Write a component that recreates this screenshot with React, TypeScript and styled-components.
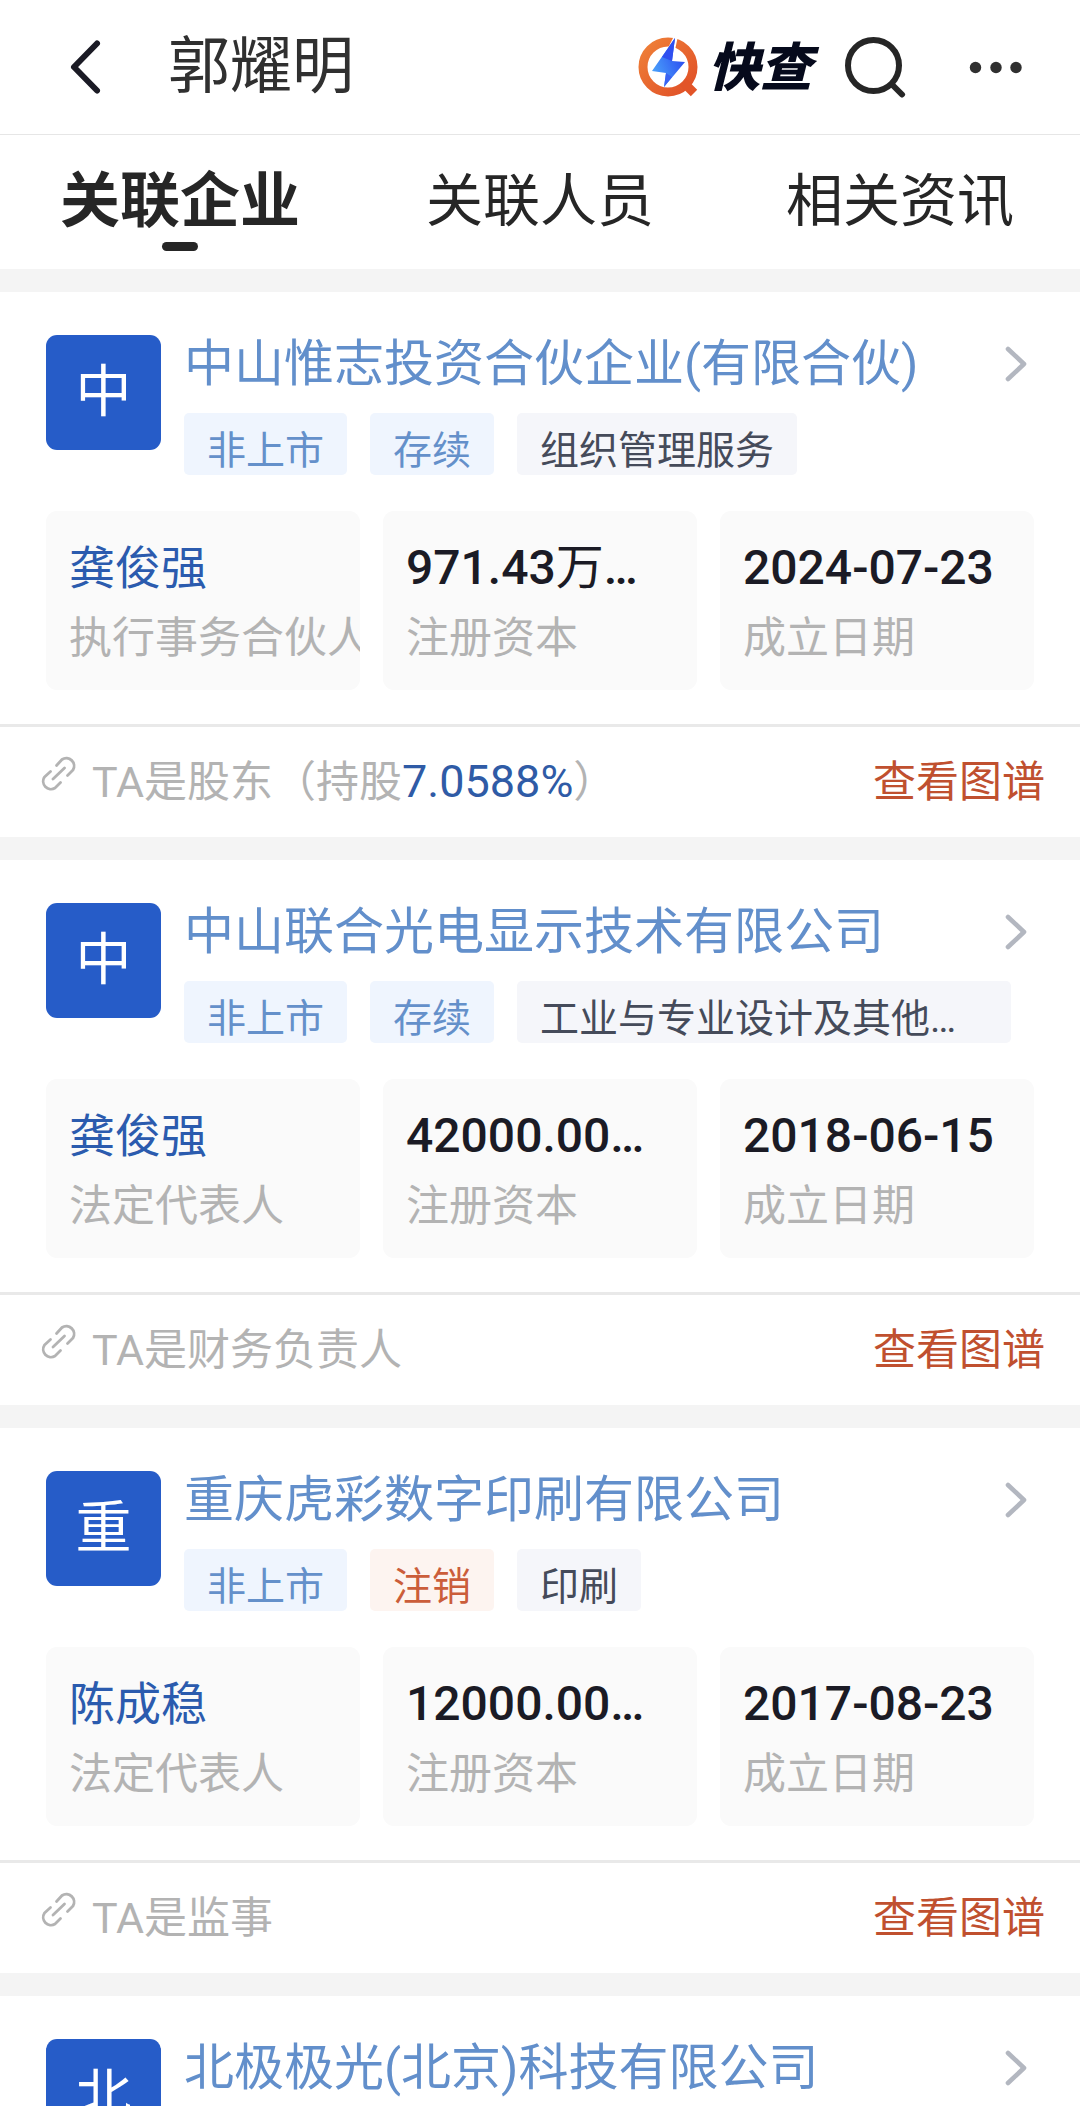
import React from "react";
import styled, { createGlobalStyle } from "styled-components";

const GlobalStyle = createGlobalStyle`
  * { box-sizing: border-box; }
  body {
    margin: 0;
    background: #fff;
    font-family: Roboto, "Noto Sans CJK SC", sans-serif;
    color: #262626;
  }
  button {
    margin: 0;
    padding: 0;
    border: 0;
    background: none;
    font: inherit;
    color: inherit;
    cursor: pointer;
  }
  a { color: inherit; text-decoration: none; }
  h1, h2, p, dl, dd { margin: 0; }
  svg { display: block; }
`;

const Screen = styled.div`
  height: 100vh;
  display: flex;
  flex-direction: column;
  overflow: hidden;
`;

const TopBar = styled.header`
  flex: none;
  height: 135px;
  display: flex;
  align-items: center;
  padding: 0 56px 0 68px;
  border-bottom: 1px solid #e6e6e6;
`;

const IconButton = styled.button`
  flex: none;
`;

const PersonName = styled.h1`
  flex: 1;
  margin-left: 64px;
  font-size: 62px;
  line-height: 80px;
  font-weight: 400;
  color: #303030;
`;

const Brand = styled.a`
  display: flex;
  align-items: center;
  gap: 8px;
  margin-right: 32px;
`;

const BrandName = styled.span`
  padding-top: 4px;
  font-size: 52px;
  line-height: 60px;
  font-weight: 900;
  font-style: italic;
  color: #060a1c;
`;

const Actions = styled.div`
  display: flex;
  align-items: center;
  gap: 62px;
`;

const Tabs = styled.nav`
  flex: none;
  display: grid;
  grid-template-columns: repeat(3, 1fr);
  height: 134px;
`;

const Tab = styled.button<{ $active?: boolean }>`
  position: relative;
  font-size: ${(p) => (p.$active ? 60 : 57)}px;
  font-weight: ${(p) => (p.$active ? 700 : 400)};
  line-height: 80px;

  &::after {
    content: "";
    display: ${(p) => (p.$active ? "block" : "none")};
    position: absolute;
    left: calc(50% - 18px);
    bottom: 18px;
    width: 36px;
    height: 9px;
    border-radius: 5px;
    background: #262626;
  }
`;

const CardList = styled.main`
  flex: 1;
  min-height: 0;
  display: flex;
  flex-direction: column;
  gap: 23px;
  padding-top: 23px;
  background: #f4f4f4;
  overflow-y: auto;
  scrollbar-width: none;
`;

const Card = styled.article`
  flex: none;
  background: #fff;
`;

const CardBody = styled.div`
  padding: 43px 46px 34px;
`;

const Summary = styled.div`
  display: flex;
  align-items: flex-start;
  gap: 23px;
`;

const Avatar = styled.div`
  flex: none;
  width: 115px;
  height: 115px;
  border-radius: 11px;
  background: #265cc8;
  color: #fff;
  font-size: 56px;
  line-height: 115px;
  text-align: center;
`;

const SummaryText = styled.div`
  flex: 1;
  min-width: 0;
`;

const CompanyLink = styled.a`
  display: flex;
  align-items: center;
  justify-content: space-between;
  padding-right: 6px;
`;

const CompanyName = styled.h2`
  font-size: 50px;
  line-height: 58px;
  font-weight: 400;
  color: #628fcb;
`;

const TagRow = styled.div`
  display: flex;
  gap: 23px;
  margin-top: 20px;
  padding-right: 23px;
`;

type Tone = "blue" | "red" | "gray";

const tones: Record<Tone, { bg: string; fg: string }> = {
  blue: { bg: "#eff5fe", fg: "#6490ca" },
  red: { bg: "#fdf4f0", fg: "#cb5d3a" },
  gray: { bg: "#f5f6fa", fg: "#454b5a" },
};

const Tag = styled.span<{ $tone: Tone }>`
  flex: ${(p) => (p.$tone === "gray" ? "0 1 auto" : "none")};
  min-width: 0;
  padding: 14px 23px 0;
  border-radius: 5px;
  font-size: 39px;
  line-height: 48px;
  white-space: nowrap;
  overflow: hidden;
  text-overflow: ellipsis;
  background: ${(p) => tones[p.$tone].bg};
  color: ${(p) => tones[p.$tone].fg};
`;

const Stats = styled.dl`
  display: grid;
  grid-template-columns: repeat(3, 1fr);
  gap: 23px;
  margin-top: 36px;
`;

const Stat = styled.div`
  display: flex;
  flex-direction: column-reverse;
  gap: 15px;
  min-width: 0;
  padding: 27px 23px;
  border-radius: 11px;
  background: #fafafa;
  overflow: hidden;
`;

const StatLabel = styled.dt`
  font-size: 43px;
  line-height: 50px;
  white-space: nowrap;
  color: #b3b3b3;
`;

const StatValue = styled.dd`
  font-size: 48px;
  line-height: 60px;
  font-weight: 500;
  white-space: nowrap;
  overflow: hidden;
  text-overflow: ellipsis;
  color: #1b1b25;
`;

const Unit = styled.span`
  font-weight: 400;
`;

const StatPerson = styled(StatValue)`
  font-size: 46px;
  font-weight: 400;
  color: #2b5bae;
`;

const Relation = styled.footer`
  display: flex;
  align-items: center;
  height: 113px;
  padding: 0 35px 0 40px;
  border-top: 3px solid #e9e9e9;
  font-size: 43px;
  line-height: 60px;
  color: #b3b3b3;
`;

const RelationText = styled.p`
  flex: 1;
  margin-left: 15px;
`;

const Share = styled.span`
  font-size: 45px;
  color: #2f5ba6;
`;

const GraphLink = styled.a`
  color: #c0502f;
`;

const LinkGlyph = styled.svg`
  flex: none;
  margin-bottom: 18px;
`;

const BackIcon = () => (
  <svg width="36" height="60" viewBox="0 0 36 60" fill="none" stroke="#1b1b25" strokeWidth="6" strokeLinecap="round" strokeLinejoin="round">
    <path d="M29 6.500 6 30 29 53.500" />
  </svg>
);

const SearchIcon = () => (
  <svg width="62" height="62" viewBox="0 0 62 62" fill="none" stroke="#262626" strokeWidth="6" strokeLinecap="round">
    <circle cx="29.500" cy="29.500" r="25.500" />
    <path d="M48.500 49 58 58.500" />
  </svg>
);

const MoreIcon = () => (
  <svg width="56" height="14" viewBox="0 0 56 14" fill="#303030">
    <circle cx="7.500" cy="7.500" r="5.700" />
    <circle cx="28" cy="7.500" r="5.700" />
    <circle cx="48" cy="7.500" r="5.700" />
  </svg>
);

const BrandMark = () => (
  <svg width="62" height="62" viewBox="0 0 62 62" fill="none">
    <defs>
      <linearGradient id="ring" x1="0" y1="0" x2="1" y2="1">
        <stop offset="0" stopColor="#ef8038" />
        <stop offset="1" stopColor="#e04f27" />
      </linearGradient>
      <linearGradient id="bolt" x1="14" y1="36" x2="46" y2="22" gradientUnits="userSpaceOnUse">
        <stop offset="0" stopColor="#4ba3fb" />
        <stop offset="1" stopColor="#2b4df0" />
      </linearGradient>
    </defs>
    <circle cx="30" cy="31" r="25" stroke="url(#ring)" strokeWidth="9" />
    <path d="M45 46 56 57" stroke="#e25428" strokeWidth="9" />
    <path d="M36 0 29 14 37 14 40 0Z" fill="#fff" />
    <path d="M37 2 14 35 28 37 26 51 47 26 34 25Z" fill="url(#bolt)" />
    <path d="M37 2 24 21 34 25Z" fill="#2f4ff0" />
    <path d="M28 37 26 51 34 41Z" fill="#3a62f2" />
  </svg>
);

const ChevronIcon = () => (
  <svg width="24" height="38" viewBox="0 0 24 38" fill="none" stroke="#b3b7c0" strokeWidth="4.600" strokeLinecap="round" strokeLinejoin="round">
    <path d="M4 4 20 19 4 34" />
  </svg>
);

const LinkIcon = () => (
  <LinkGlyph width="37" height="37" viewBox="0 0 37 37" fill="none" stroke="#b3b3b3" strokeWidth="2.800" strokeLinecap="round" strokeLinejoin="round">
    <path d="M16.500 10.500 22 4.500A7.800 7.800 0 0 1 33 15L27.500 20.500" />
    <path d="M10.500 16.500 4.500 22A7.800 7.800 0 0 0 15 33L20.500 27.500" />
    <path d="M13 24 24.500 13" />
  </LinkGlyph>
);

interface Company {
  name: string;
  tags?: { text: string; tone: Tone }[];
  person?: { name: string; role: string };
  capital?: string;
  founded?: string;
  relation?: React.ReactNode;
}

const companies: Company[] = [
  {
    name: "中山惟志投资合伙企业(有限合伙)",
    tags: [
      { text: "非上市", tone: "blue" },
      { text: "存续", tone: "blue" },
      { text: "组织管理服务", tone: "gray" },
    ],
    person: { name: "龚俊强", role: "执行事务合伙人" },
    capital: "971.43",
    founded: "2024-07-23",
    relation: (
      <>
        TA是股东（持股<Share>7.0588%</Share>）
      </>
    ),
  },
  {
    name: "中山联合光电显示技术有限公司",
    tags: [
      { text: "非上市", tone: "blue" },
      { text: "存续", tone: "blue" },
      { text: "工业与专业设计及其他专业技术服务", tone: "gray" },
    ],
    person: { name: "龚俊强", role: "法定代表人" },
    capital: "42000.00",
    founded: "2018-06-15",
    relation: "TA是财务负责人",
  },
  {
    name: "重庆虎彩数字印刷有限公司",
    tags: [
      { text: "非上市", tone: "blue" },
      { text: "注销", tone: "red" },
      { text: "印刷", tone: "gray" },
    ],
    person: { name: "陈成稳", role: "法定代表人" },
    capital: "12000.00",
    founded: "2017-08-23",
    relation: "TA是监事",
  },
  { name: "北极极光(北京)科技有限公司" },
];

const CompanyCard = ({ company }: { company: Company }) => (
  <Card>
    <CardBody>
      <Summary>
        <Avatar>{company.name[0]}</Avatar>
        <SummaryText>
          <CompanyLink href="#company">
            <CompanyName>{company.name}</CompanyName>
            <ChevronIcon />
          </CompanyLink>
          {company.tags && (
            <TagRow>
              {company.tags.map((tag) => (
                <Tag key={tag.text} $tone={tag.tone}>
                  {tag.text}
                </Tag>
              ))}
            </TagRow>
          )}
        </SummaryText>
      </Summary>
      {company.person && (
        <Stats>
          <Stat>
            <StatLabel>{company.person.role}</StatLabel>
            <StatPerson>{company.person.name}</StatPerson>
          </Stat>
          <Stat>
            <StatLabel>注册资本</StatLabel>
            <StatValue>
              {company.capital}
              <Unit>万人民币</Unit>
            </StatValue>
          </Stat>
          <Stat>
            <StatLabel>成立日期</StatLabel>
            <StatValue>{company.founded}</StatValue>
          </Stat>
        </Stats>
      )}
    </CardBody>
    {company.relation && (
      <Relation>
        <LinkIcon />
        <RelationText>{company.relation}</RelationText>
        <GraphLink href="#graph">查看图谱</GraphLink>
      </Relation>
    )}
  </Card>
);

export default function App() {
  return (
    <Screen>
      <GlobalStyle />
      <TopBar>
        <IconButton aria-label="返回">
          <BackIcon />
        </IconButton>
        <PersonName>郭耀明</PersonName>
        <Brand href="#home">
          <BrandMark />
          <BrandName>快查</BrandName>
        </Brand>
        <Actions>
          <IconButton aria-label="搜索">
            <SearchIcon />
          </IconButton>
          <IconButton aria-label="更多">
            <MoreIcon />
          </IconButton>
        </Actions>
      </TopBar>
      <Tabs>
        <Tab $active>关联企业</Tab>
        <Tab>关联人员</Tab>
        <Tab>相关资讯</Tab>
      </Tabs>
      <CardList>
        {companies.map((company) => (
          <CompanyCard key={company.name} company={company} />
        ))}
      </CardList>
    </Screen>
  );
}
